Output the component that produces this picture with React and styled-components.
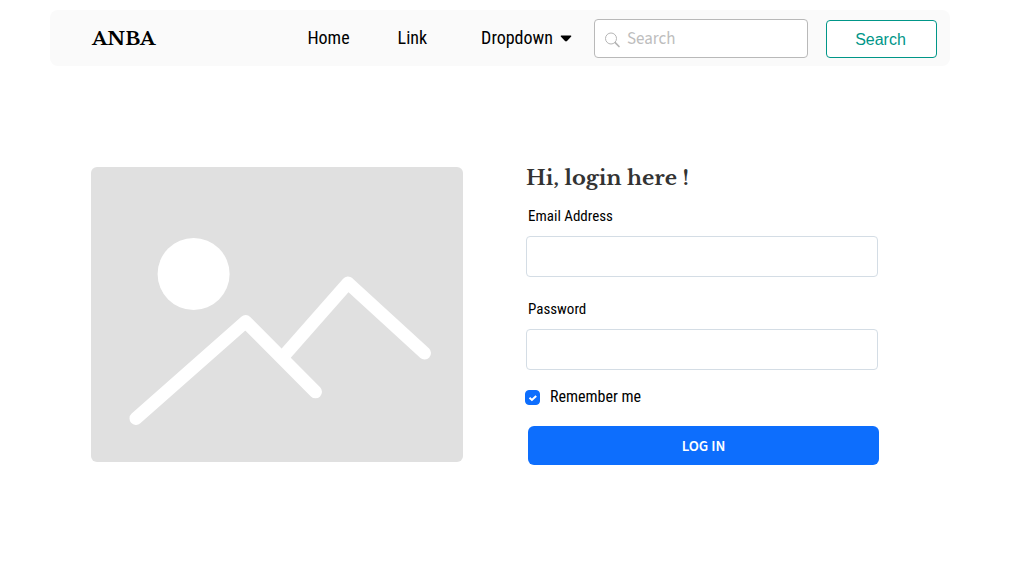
import React from "react";
import styled, { createGlobalStyle } from "styled-components";

const condensed = `"Roboto Condensed", "Liberation Sans Narrow", Roboto, sans-serif`;
const serif = `"Libre Baskerville", "Liberation Serif", serif`;
const sourceSans = `"Source Sans Pro", "Source Sans 3", "Noto Sans CJK JP", sans-serif`;

const GlobalStyle = createGlobalStyle`
  *, *::before, *::after { box-sizing: border-box; }
  body { margin: 0; background: #fff; color: #000; font-family: ${condensed}; }
  button, input { font: inherit; }
`;

const Page = styled.div`
  padding: 10px 80px 40px 50px;
`;

const Header = styled.header`
  display: flex;
  align-items: center;
  min-height: 56px;
  padding: 0 13px 0 42px;
  border-radius: 8px;
  background: #fafafa;
`;

const Brand = styled.a`
  margin-right: auto;
  padding-top: 2px;
  color: #000;
  font: 700 19px/28px ${serif};
  text-decoration: none;
`;

const Nav = styled.nav`
  display: flex;
  align-items: center;
  gap: 48px;
  margin-right: 16px;
`;

const NavLink = styled.a`
  color: #000;
  font-size: 18px;
  line-height: 24px;
  text-decoration: none;
`;

const NavMenu = styled.button`
  display: flex;
  align-items: center;
  gap: 7px;
  padding: 0 6px;
  border: 0;
  background: none;
  color: #000;
  font-size: 18px;
  line-height: 24px;
`;

const SearchForm = styled.form`
  display: flex;
  align-items: flex-end;
  gap: 18px;
`;

const SearchField = styled.label`
  display: flex;
  align-items: center;
  gap: 6px;
  width: 214px;
  height: 39px;
  padding: 0 10px;
  border: 1px solid #b9b9b9;
  border-radius: 4px;
  background: #fff;
`;

const SearchInput = styled.input`
  flex: 1;
  min-width: 0;
  padding: 2px 0 0;
  border: 0;
  outline: 0;
  background: none;
  font: 400 17px/24px ${sourceSans};
  &::placeholder { color: #bdbdbd; opacity: 1; }
`;

const SearchButton = styled.button`
  width: 111px;
  height: 38px;
  padding: 2px 2px 0 0;
  border: 1px solid #009688;
  border-radius: 4px;
  background: #fff;
  color: #009688;
  font: 400 16px/24px "Liberation Sans", sans-serif;
`;

const Main = styled.main`
  display: grid;
  grid-template-columns: 372fr 352fr;
  align-items: center;
  gap: 63px;
  padding: 98px 72px 0 41px;
`;

const Picture = styled.svg`
  display: block;
  width: 100%;
  height: auto;
`;

const LoginForm = styled.form`
  display: flex;
  flex-direction: column;
`;

const Title = styled.h1`
  margin: 0 0 14px;
  color: #333;
  font: 700 21px/28px ${serif};
`;

const Field = styled.div`
  display: flex;
  flex-direction: column;
  gap: 10px;
  margin-bottom: ${(p) => (p.$last ? "17px" : "22px")};
`;

const FieldLabel = styled.label`
  padding-left: 2px;
  font-size: 15px;
  line-height: 20px;
`;

const TextInput = styled.input`
  width: 100%;
  height: 41px;
  padding: 0 12px;
  border: 1px solid #d4dde5;
  border-radius: 4px;
  background: #fff;
  font-size: 16px;
`;

const Remember = styled.label`
  display: flex;
  align-items: center;
  gap: 10px;
  margin: 0 0 19px -1px;
  font-size: 16px;
  line-height: 20px;
`;

const CheckWrap = styled.span`
  display: grid;
  width: 15px;
  height: 15px;
  > * { grid-area: 1 / 1; }
`;

const Checkbox = styled.input`
  appearance: none;
  width: 15px;
  height: 15px;
  margin: 0;
  border: 1px solid #0d6efd;
  border-radius: 4px;
  background: #fff;
  &:checked { background: #0d6efd; }
  &:not(:checked) + svg { visibility: hidden; }
`;

const CheckMark = styled.svg`
  pointer-events: none;
`;

const LoginButton = styled.button`
  height: 39px;
  margin: 0 -1px 0 2px;
  padding: 2px 0 0;
  border: 0;
  border-radius: 6px;
  background: #0d6efd;
  color: #fff;
  font: 600 15px/20px ${sourceSans};
`;

export default function App() {
  return (
    <>
      <GlobalStyle />
      <Page>
        <Header>
          <Brand href="#">ANBA</Brand>
          <Nav>
            <NavLink href="#">Home</NavLink>
            <NavLink href="#">Link</NavLink>
            <NavMenu type="button" aria-haspopup="menu">
              Dropdown
              <svg width="12" height="7" viewBox="0 0 12 7" aria-hidden="true">
                <path d="M1.2 0.5H10.8Q12 0.8 11 1.8L7 6Q6 6.9 5 6L1 1.8Q0 0.8 1.2 0.5Z" fill="#000" />
              </svg>
            </NavMenu>
          </Nav>
          <SearchForm onSubmit={(e) => e.preventDefault()}>
            <SearchField>
              <svg width="16" height="20" viewBox="0 0 16 20" fill="none" stroke="#b5b5b5" aria-hidden="true">
                <circle cx="6" cy="10.5" r="5.5" />
                <path d="M10.2 14.7L14 18.5" strokeWidth="1.7" strokeLinecap="round" />
              </svg>
              <SearchInput type="search" placeholder="Search" aria-label="Search" />
            </SearchField>
            <SearchButton type="submit">Search</SearchButton>
          </SearchForm>
        </Header>
        <Main>
          <Picture viewBox="0 0 372 295" role="img" aria-label="Placeholder">
            <rect width="372" height="295" rx="6" fill="#e0e0e0" />
            <circle cx="102.6" cy="107" r="36" fill="#fff" />
            <g fill="none" stroke="#fff" strokeWidth="13" strokeLinecap="round" strokeLinejoin="round">
              <path d="M45 251.400L154.600 154.600L224.500 224.800" />
              <path d="M194 187.500L257 116L333.500 186" />
            </g>
          </Picture>
          <LoginForm onSubmit={(e) => e.preventDefault()}>
            <Title>Hi, login here !</Title>
            <Field>
              <FieldLabel htmlFor="email">Email Address</FieldLabel>
              <TextInput id="email" type="email" />
            </Field>
            <Field $last>
              <FieldLabel htmlFor="password">Password</FieldLabel>
              <TextInput id="password" type="password" />
            </Field>
            <Remember>
              <CheckWrap>
                <Checkbox type="checkbox" defaultChecked />
                <CheckMark width="15" height="15" viewBox="0 0 15 15" fill="none" aria-hidden="true">
                  <path d="M4.500 7.800L6.900 10L11.200 6" stroke="#fff" strokeWidth="2" />
                </CheckMark>
              </CheckWrap>
              Remember me
            </Remember>
            <LoginButton type="submit">LOG IN</LoginButton>
          </LoginForm>
        </Main>
      </Page>
    </>
  );
}
